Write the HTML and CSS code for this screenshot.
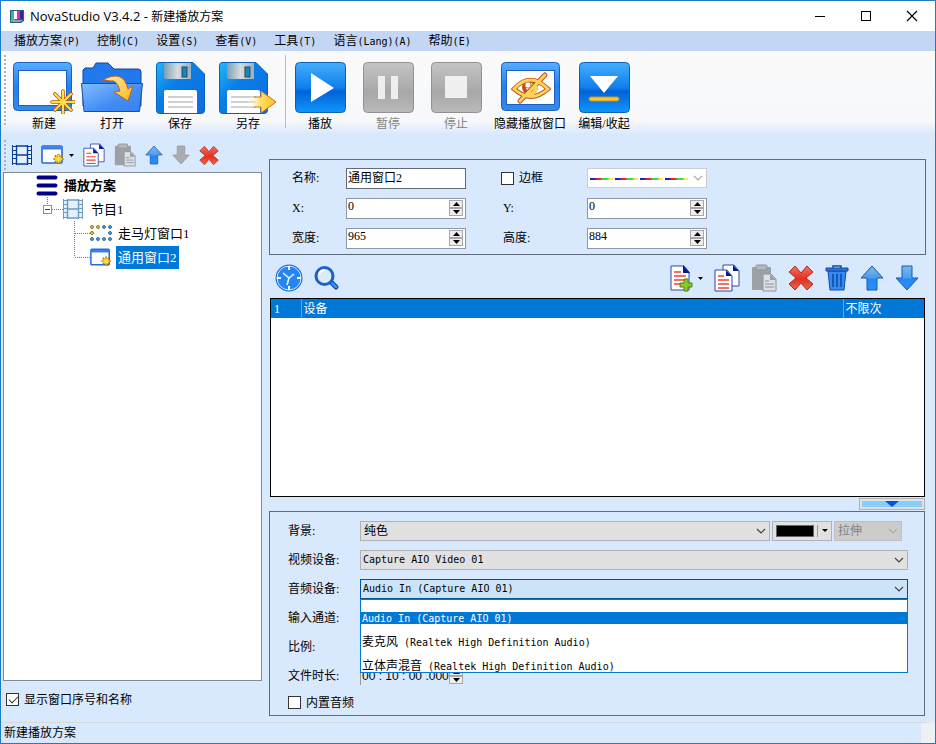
FILE: index.html
```html
<!DOCTYPE html>
<html lang="zh-CN">
<head>
<meta charset="utf-8">
<title>NovaStudio V3.4.2 - 新建播放方案</title>
<link rel="stylesheet" href="styles.css">
</head>
<body>
<svg class="defs" aria-hidden="true">
  <defs>
    <linearGradient id="blue" x1="0" y1="0" x2="0" y2="1"><stop offset="0" stop-color="#45adfc"/><stop offset=".5" stop-color="#0e80ea"/><stop offset=".58" stop-color="#0062d8"/><stop offset="1" stop-color="#1097fb"/></linearGradient>
    <linearGradient id="frame" x1="0" y1="0" x2="0" y2="1"><stop offset="0" stop-color="#58adff"/><stop offset=".5" stop-color="#2582ee"/><stop offset="1" stop-color="#3589ef"/></linearGradient>
    <linearGradient id="gray" x1="0" y1="0" x2="0" y2="1"><stop offset="0" stop-color="#c5c5c5"/><stop offset=".6" stop-color="#a7a7a7"/><stop offset="1" stop-color="#bababa"/></linearGradient>
    <linearGradient id="folder" x1="0" y1="0" x2="1" y2="1"><stop offset="0" stop-color="#83beff"/><stop offset=".6" stop-color="#418cf5"/><stop offset="1" stop-color="#3882ef"/></linearGradient>
    <linearGradient id="disk" x1="0" y1="0" x2="1" y2="1"><stop offset="0" stop-color="#24b7f7"/><stop offset=".4" stop-color="#087ee7"/><stop offset="1" stop-color="#116be1"/></linearGradient>
    <linearGradient id="gold" x1="0" y1="0" x2="1" y2="1"><stop offset="0" stop-color="#fff4a4"/><stop offset="1" stop-color="#ffb51c"/></linearGradient>
    <linearGradient id="goldh"><stop offset="0" stop-color="#fff" stop-opacity="0"/><stop offset=".5" stop-color="#ffdf62"/><stop offset="1" stop-color="#ffbd24"/></linearGradient>
    <linearGradient id="metal"><stop offset="0" stop-color="#7e9eb4"/><stop offset=".5" stop-color="#d6dce0"/><stop offset="1" stop-color="#9db0bd"/></linearGradient>
    <linearGradient id="arrow" x1="0" y1="0" x2="0" y2="1"><stop offset="0" stop-color="#7db9ef"/><stop offset=".5" stop-color="#4e9ce8"/><stop offset=".55" stop-color="#2186fb"/><stop offset="1" stop-color="#2d8efb"/></linearGradient>
    <linearGradient id="red" x1="0" y1="0" x2="0" y2="1"><stop offset="0" stop-color="#ef7268"/><stop offset=".55" stop-color="#e5301e"/><stop offset="1" stop-color="#e46d52"/></linearGradient>
  </defs>
  <symbol id="i-film" viewBox="0 0 20 20"><rect x="1" y="1" width="18" height="18" fill="#e4f0ff"/><path d="M.5 0v20M19.500 0v20" stroke="currentColor"/><path d="M4.500 0v20M15.500 0v20M5 1h10M5 10h10M5 19h10" stroke="currentColor" stroke-width="1.400"/><path d="M1 1.500h4M1 5.500h4M1 9.500h4M1 13.500h4M1 18.500h4M15 1.500h4M15 5.500h4M15 9.500h4M15 13.500h4M15 18.500h4" stroke="currentColor"/></symbol>
  <symbol id="i-window" viewBox="0 0 24 20"><rect x="1" y="1" width="20" height="17" rx="1" fill="#fff" stroke="#2468df" stroke-width="1.6"/><path d="M1 3h20" stroke="#3a7df0" stroke-width="3"/><path d="M17.500 9v10M12.500 14h10M14 10.500l7 7M21 10.500l-7 7" stroke="#b66a00" stroke-width="2"/><path d="M17.500 10v8M13.500 14h8M15 11.500l5 5M20 11.500l-5 5" stroke="#ffe43b" stroke-width="1.300"/></symbol>
  <symbol id="i-copy" viewBox="0 0 26 28"><path d="M9 1h11l5 6v15H9z" fill="#fff" stroke="#2b4aa5"/><path d="M19 1l6 6h-6z" fill="#001d97"/><path d="M1 6h12l5 6v15H1z" fill="#fff" stroke="#2b4aa5"/><path d="M12 6l6 6h-6z" fill="#001d97"/><path d="M4 12h6M4 16h11M4 20h11M4 24h11" stroke="#ef432f" stroke-width="1.300"/></symbol>
  <symbol id="i-paste" viewBox="0 0 26 28"><rect x="1" y="3" width="19" height="23" rx="1" fill="#9ca1a8"/><rect x="5" y="1" width="11" height="5" rx="1" fill="#b4b7bc" stroke="#8f9399"/><path d="M12 10h8l5 5v12H12z" fill="#dce0e5" stroke="#8d949d"/><path d="M19 10l6 6h-6z" fill="#989fa7"/><path d="M14 17h4M14 20h9M14 23h9" stroke="#8d949d"/></symbol>
  <symbol id="i-up" viewBox="0 0 24 26"><path d="M12 1L23 13h-6v12H7V13H1z" fill="url(#arrow)" stroke="#1559b5"/></symbol>
  <symbol id="i-down" viewBox="0 0 24 26"><path d="M7 1h10v12h6L12 25 1 13h6z" fill="url(#arrow)" stroke="#1559b5"/></symbol>
  <symbol id="i-downgray" viewBox="0 0 24 26"><path d="M7 1h10v12h6L12 25 1 13h6z" fill="#a9adb2" stroke="#8f959c"/></symbol>
  <symbol id="i-x" viewBox="0 0 26 26"><path d="M7 1l6 7 6-7 6 6-7 6 7 6-6 6-6-7-6 7-6-6 7-6-7-6z" fill="url(#red)" stroke="#b52a1c" stroke-linejoin="round"/></symbol>
  <symbol id="i-chev" viewBox="0 0 10 6"><path d="M1 1l4 4 4-4" fill="none" stroke="currentColor" stroke-width="1.200"/></symbol>
  <symbol id="i-floppy" viewBox="0 0 49 52"><path d="M3 .5h34L48.500 12v36q0 3.500-3 3.500H3.500q-3 0-3-3V4q0-3.500 2.500-3.500z" fill="url(#disk)" stroke="#0a62b8"/><path d="M8 1h27v16H10q-2 0-2-2z" fill="url(#metal)"/><rect x="26" y="5" width="5" height="10" fill="#1686bd" stroke="#234c62"/><path d="M10 28h29q2 0 2 2v21H8V30q0-2 2-2z" fill="#fff"/><path d="M12 35h25M12 40h25M12 45h25" stroke="#9ca1aa"/></symbol>
</svg>

<div class="window">
  <header class="titlebar">
    <svg class="app-icon" viewBox="0 0 14 13"><path d="M0 0h14v11l-3 2H0z" fill="#28607b"/><path d="M1 1h4v9H1z" fill="#2eb8b0"/><path d="M4 1h3v8H4z" fill="#fff"/><path d="M7 1h3v8H7z" fill="#e626a9"/><path d="M10 1h3v8h-3z" fill="#3521a3"/><path d="M1 10h12l-3 2H1z" fill="#88a6b2"/></svg>
    <h1><span class="product">NovaStudio V3.4.2 - </span>新建播放方案</h1>
    <button class="win-btn" aria-label="最小化"><svg width="12" height="12"><path d="M1 6.500h10" stroke="#000"/></svg></button>
    <button class="win-btn" aria-label="最大化"><svg width="12" height="12"><rect x="1.500" y="1.500" width="9" height="9" fill="none" stroke="#000"/></svg></button>
    <button class="win-btn" aria-label="关闭"><svg width="12" height="12"><path d="M1 1l10 10M11 1L1 11" stroke="#000" stroke-width="1.200"/></svg></button>
  </header>

  <nav class="menubar">
    <button>播放方案<span class="en">(P)</span></button>
    <button>控制<span class="en">(C)</span></button>
    <button>设置<span class="en">(S)</span></button>
    <button>查看<span class="en">(V)</span></button>
    <button>工具<span class="en">(T)</span></button>
    <button>语言<span class="en">(Lang)(A)</span></button>
    <button>帮助<span class="en">(E)</span></button>
  </nav>

  <div class="toolbar">
    <span class="grip"></span>
    <button class="tool"><svg width="62" height="52" viewBox="0 0 62 52"><rect x=".5" y=".5" width="58" height="48" rx="4" fill="url(#frame)" stroke="#1c62bd"/><rect x="5.500" y="8.500" width="48" height="35" fill="#fff" stroke="#1d5fc4"/><path d="M50 29v22M39 40h22M42 32l16 16M58 32L42 48" stroke="#b65b00" stroke-width="3.600" stroke-linecap="round"/><path d="M50 29v22M39 40h22M42 32l16 16M58 32L42 48" stroke="#ffdf4e" stroke-width="2" stroke-linecap="round"/></svg><span>新建</span></button>
    <button class="tool"><svg width="62" height="52" viewBox="0 0 62 52"><path d="M2 8l2-2h8l3-5h12l6 6h24q3 0 3 3v34H2z" fill="#2179ec" stroke="#14469b"/><path d="M.500 21.500h61l-3 28H3z" fill="url(#folder)" stroke="#1c4e9f"/><path d="M20 19q22-13 27 8l5-3-5 15-14-9 6-1q-3-12-10-10-5-2-9 0z" fill="url(#gold)" stroke="#bd5d26" stroke-linejoin="round"/></svg><span>打开</span></button>
    <button class="tool"><svg width="49" height="52"><use href="#i-floppy"/></svg><span>保存</span></button>
    <button class="tool"><svg width="58" height="52" viewBox="0 0 58 52"><svg width="49" height="52"><use href="#i-floppy"/></svg><path d="M27 35h15v-6l15 11-15 11v-6H27z" fill="url(#goldh)"/><path d="M35 35h7v-6l15 11-15 11v-6h-7" fill="none" stroke="#cf701c"/></svg><span>另存</span></button>
    <span class="divider"></span>
    <button class="tool"><svg width="51" height="52" viewBox="0 0 51 52"><rect x=".5" y=".5" width="50" height="50" rx="4" fill="url(#blue)" stroke="#0c60b4"/><path d="M16 11l23 15-23 14z" fill="#fff"/></svg><span>播放</span></button>
    <button class="tool" disabled><svg width="51" height="52" viewBox="0 0 51 52"><rect x=".5" y=".5" width="50" height="50" rx="4" fill="url(#gray)" stroke="#919191"/><path d="M15 14h7v23h-7zM28 14h7v23h-7z" fill="#eee"/></svg><span>暂停</span></button>
    <button class="tool" disabled><svg width="51" height="52" viewBox="0 0 51 52"><rect x=".5" y=".5" width="50" height="50" rx="4" fill="url(#gray)" stroke="#919191"/><path d="M14 14h22v22H14z" fill="#f0f0f0"/></svg><span>停止</span></button>
    <button class="tool tool-wide"><svg width="59" height="52" viewBox="0 0 59 52"><rect x=".5" y=".5" width="58" height="48" rx="4" fill="url(#frame)" stroke="#1c62bd"/><rect x="5.500" y="8.500" width="48" height="34" fill="#fff" stroke="#1d5fc4"/><g fill="none" stroke-linecap="round"><path d="M13 27q16-18 34 0-17 15-34 0z" stroke="#bd521b" stroke-width="4.600"/><circle cx="29" cy="25" r="6" stroke="#bd521b" stroke-width="4"/><path d="M19 39l25-26" stroke="#bd521b" stroke-width="5"/><path d="M13 27q16-18 34 0-17 15-34 0z" stroke="#ffd35a" stroke-width="2.800"/><path d="M35 25q-1 8-8 7" stroke="#ffd35a" stroke-width="4"/><path d="M19 39l25-26" stroke="#ffd35a" stroke-width="3"/><circle cx="27" cy="23" r="3" fill="#fff" stroke="#d88736"/></g></svg><span>隐藏播放窗口</span></button>
    <button class="tool"><svg width="51" height="52" viewBox="0 0 51 52"><rect x=".5" y=".5" width="50" height="50" rx="4" fill="url(#blue)" stroke="#0c60b4"/><path d="M11 14h28L25 31z" fill="#fff"/><rect x="10" y="35" width="30" height="4" rx="2" fill="#ffc52b" stroke="#bd9437"/></svg><span>编辑/收起</span></button>
  </div>

  <main class="content">
    <aside class="side">
      <div class="side-tools">
        <span class="grip"></span>
        <button aria-label="新建节目"><svg class="film" width="20" height="20"><use href="#i-film"/></svg></button>
        <button class="with-caret" aria-label="新建窗口"><svg width="24" height="20"><use href="#i-window"/></svg><svg width="5" height="3"><path d="M0 0h5L2.500 3z"/></svg></button>
        <button aria-label="复制"><svg width="22" height="24"><use href="#i-copy"/></svg></button>
        <button aria-label="粘贴" disabled><svg width="22" height="24"><use href="#i-paste"/></svg></button>
        <button aria-label="上移"><svg width="18" height="22" preserveAspectRatio="none"><use href="#i-up"/></svg></button>
        <button aria-label="下移" disabled><svg width="18" height="22"><use href="#i-downgray"/></svg></button>
        <button aria-label="删除"><svg width="20" height="21"><use href="#i-x"/></svg></button>
      </div>
      <ul class="tree">
        <li>
          <div class="node root"><svg width="22" height="24"><path d="M2.500 4.500h17M2.500 12.500h17M2.500 20.500h17" stroke="#00008a" stroke-width="4" stroke-linecap="round"/></svg><span class="name">播放方案</span></div>
          <ul>
            <li>
              <div class="node"><svg class="lines" width="27" height="24"><path d="M11.500 0v8M16 12.500h11" /><rect class="box" x="7.500" y="8.500" width="8" height="8"/><path class="minus" d="M9 12.500h5"/></svg><svg class="film-soft" width="20" height="20"><use href="#i-film"/></svg><span class="name">节目1</span></div>
              <ul>
                <li><div class="node"><svg class="lines" width="27" height="24"><path d="M11.500 0v24M12 12.500h15"/></svg><svg width="22" height="20"><g fill="#ffc94a" stroke="#8c7026"><circle cx="2" cy="4" r="1.500"/><circle cx="8" cy="4" r="1.500"/><circle cx="2" cy="10" r="1.500"/></g><g fill="#4d9ee8" stroke="#3b6c9a"><circle cx="14" cy="4" r="1.500"/><circle cx="20" cy="4" r="1.500"/><circle cx="20" cy="10" r="1.500"/><circle cx="2" cy="16" r="1.500"/><circle cx="8" cy="16" r="1.500"/><circle cx="14" cy="16" r="1.500"/><circle cx="20" cy="16" r="1.500"/></g></svg><span class="name">走马灯窗口1</span></div></li>
                <li><div class="node"><svg class="lines" width="27" height="24"><path d="M11.500 0v12M12 12.500h15"/></svg><svg width="22" height="19"><use href="#i-window"/></svg><span class="name selected">通用窗口2</span></div></li>
              </ul>
            </li>
          </ul>
        </li>
      </ul>
      <label class="check show-names"><input type="checkbox" checked>显示窗口序号和名称</label>
    </aside>

    <section class="editor">
      <div class="panel geometry">
        <label for="name">名称:</label>
        <div class="cell"><input id="name" class="field" type="text" value="通用窗口2"></div>
        <label class="check"><input type="checkbox">边框</label>
        <div class="combo line-combo"><select aria-label="边框样式" disabled><option></option></select><span class="dash-line"></span><svg class="chev" width="10" height="6"><use href="#i-chev"/></svg></div>
        <label for="x">X:</label>
        <div class="cell"><div class="spin"><input id="x" type="text" value="0"><span class="steps"><button aria-label="增加"><svg width="7" height="4"><path d="M0 4h7L3.500 0z"/></svg></button><button aria-label="减少"><svg width="7" height="4"><path d="M0 0h7L3.500 4z"/></svg></button></span></div></div>
        <label class="second" for="y">Y:</label>
        <div class="spin"><input id="y" type="text" value="0"><span class="steps"><button aria-label="增加"><svg width="7" height="4"><path d="M0 4h7L3.500 0z"/></svg></button><button aria-label="减少"><svg width="7" height="4"><path d="M0 0h7L3.500 4z"/></svg></button></span></div>
        <label for="w">宽度:</label>
        <div class="cell"><div class="spin"><input id="w" type="text" value="965"><span class="steps"><button aria-label="增加"><svg width="7" height="4"><path d="M0 4h7L3.500 0z"/></svg></button><button aria-label="减少"><svg width="7" height="4"><path d="M0 0h7L3.500 4z"/></svg></button></span></div></div>
        <label class="second" for="h">高度:</label>
        <div class="spin"><input id="h" type="text" value="884"><span class="steps"><button aria-label="增加"><svg width="7" height="4"><path d="M0 4h7L3.500 0z"/></svg></button><button aria-label="减少"><svg width="7" height="4"><path d="M0 0h7L3.500 4z"/></svg></button></span></div>
      </div>

      <div class="media-tools">
        <button aria-label="定时"><svg width="28" height="28" viewBox="0 0 28 28"><circle cx="14" cy="14" r="13.500" fill="#176edb"/><circle cx="14" cy="14" r="12" fill="#2684f7" stroke="#d6eaff"/><path d="M14 2v4M14 22v4M2 14h4M22 14h4" stroke="#fff" stroke-width="2"/><path d="M8 9l6 5 5-4M14 14l-2 7" fill="none" stroke="#e8f4ff" stroke-width="1.600"/></svg></button>
        <button aria-label="预览"><svg width="26" height="26" viewBox="0 0 26 26"><path d="M17 17l5 5" stroke="#1554b8" stroke-width="5" stroke-linecap="round"/><path d="M18 18l4 4" stroke="#4799f5" stroke-width="2" stroke-linecap="round"/><circle cx="10.500" cy="11" r="8.500" fill="#dcebf9" stroke="#1c61c8" stroke-width="3"/><path d="M5 10q1-5 6-5" fill="none" stroke="#fff" stroke-width="2"/></svg></button>
        <span class="spacer"></span>
        <button class="with-caret" aria-label="添加"><svg width="24" height="28" viewBox="0 0 24 28"><path d="M1 2h13l5 6v18H1z" fill="#fff" stroke="#2b4aa5"/><path d="M13 1l7 8h-7z" fill="#001d97"/><path d="M4 8h7M4 12h12M4 16h10M4 20h6" stroke="#ef432f" stroke-width="1.500"/><path d="M14 15h4v4h4v4h-4v4h-4v-4h-4v-4h4z" fill="#8bc829" stroke="#498514"/></svg><svg width="5" height="3"><path d="M0 0h5L2.500 3z"/></svg></button>
        <button aria-label="复制"><svg width="26" height="28"><use href="#i-copy"/></svg></button>
        <button aria-label="粘贴" disabled><svg width="26" height="28"><use href="#i-paste"/></svg></button>
        <button aria-label="删除"><svg width="26" height="26"><use href="#i-x"/></svg></button>
        <button aria-label="清空"><svg width="24" height="26" viewBox="0 0 24 26"><path d="M8 3V1h8v2" fill="none" stroke="#14489f" stroke-width="1.500"/><path d="M3 6h18l-2 19H5z" fill="#338cf6" stroke="#14489f"/><path d="M1 3h22v3H1z" fill="#2579e2" stroke="#14489f"/><path d="M8 9v13M12 9v13M16 9v13" stroke="#10479f" stroke-width="1.500"/></svg></button>
        <button aria-label="上移"><svg width="24" height="26"><use href="#i-up"/></svg></button>
        <button aria-label="下移"><svg width="24" height="26"><use href="#i-down"/></svg></button>
      </div>

      <div class="media-list">
        <table><tbody><tr><td class="num">1</td><td>设备</td><td class="times">不限次</td></tr></tbody></table>
      </div>

      <div class="collapse-row"><button class="collapse" aria-label="收起"><svg width="14" height="6"><path d="M0 0h14L7 6z" fill="#0055dd"/></svg></button></div>

      <div class="panel props">
        <label for="bg">背景:</label>
        <div class="bg-row">
          <div class="combo grow"><select id="bg"><option>纯色</option></select><svg class="chev" width="10" height="6"><use href="#i-chev"/></svg></div>
          <button class="swatch" aria-label="颜色"><span class="chip"></span><span class="bar"></span><svg width="6" height="3"><path d="M0 0h6L3 3z"/></svg></button>
          <div class="combo stretch"><select aria-label="填充方式" disabled><option>拉伸</option></select><svg class="chev" width="10" height="6"><use href="#i-chev"/></svg></div>
        </div>
        <label for="video">视频设备:</label>
        <div class="combo"><select id="video" class="en"><option>Capture AIO Video 01</option></select><svg class="chev" width="10" height="6"><use href="#i-chev"/></svg></div>
        <label for="audio">音频设备:</label>
        <div class="combo open">
          <select id="audio" class="en"><option>Audio In (Capture AIO 01)</option></select><svg class="chev" width="10" height="6"><use href="#i-chev"/></svg>
          <ul class="options" role="listbox">
            <li role="option" class="current"><span class="en">Audio In (Capture AIO 01)</span></li>
            <li role="option">麦克风<span class="en"> (Realtek High Definition Audio)</span></li>
            <li role="option">立体声混音<span class="en"> (Realtek High Definition Audio)</span></li>
          </ul>
        </div>
        <span class="row-label">输入通道:</span><span></span>
        <span class="row-label">比例:</span><span></span>
        <label for="time">文件时长:</label>
        <div class="spin time"><input id="time" type="text" value="00 : 10 : 00 .000"><span class="steps"><button aria-label="增加"><svg width="7" height="4"><path d="M0 4h7L3.500 0z"/></svg></button><button aria-label="减少"><svg width="7" height="4"><path d="M0 0h7L3.500 4z"/></svg></button></span></div>
        <label class="check builtin"><input type="checkbox">内置音频</label>
      </div>
    </section>
  </main>

  <footer class="status">新建播放方案</footer>
</div>
</body>
</html>
```
FILE: styles.css
```css
* { box-sizing: border-box; }
body { margin: 0; font: 12px/16px "Liberation Serif", "Noto Sans CJK SC", serif; color: #000; }
button, input, select { font: inherit; color: inherit; margin: 0; }
button { padding: 0; border: 0; background: none; }
svg { display: block; flex: none; }
ul { list-style: none; margin: 0; padding: 0; }
.defs { position: absolute; width: 0; height: 0; }
.en, .combo select.en { font-family: "DejaVu Sans Mono", "Liberation Mono", monospace; font-size: 10px; }

.window { display: flex; flex-direction: column; min-height: 100vh; border: 1px solid #1c7cc8; background: #d9e9fd; }

.titlebar { display: flex; align-items: center; height: 30px; padding-left: 9px; background: #fff; }
.app-icon { width: 14px; height: 13px; }
.titlebar h1 { flex: 1; margin: 0 0 0 6px; font: 12px/16px "Open Sans", "Noto Sans CJK SC", sans-serif; }
.product { font-size: 13px; }
.win-btn { display: flex; align-items: center; justify-content: center; width: 46px; height: 30px; }

.menubar { display: flex; gap: 17px; height: 20px; padding-left: 13px; background: #c3d7f5; }
.menubar button { line-height: 20px; white-space: nowrap; }

.grip { flex: none; width: 2px; background: repeating-linear-gradient(#aab3c0 0 2px, transparent 2px 4px); }
.toolbar { display: flex; height: 85px; padding: 4px 0 0 3px; background: linear-gradient(#fafafa, #f7f8fa 70px, #d9e9fd 83px); }
.toolbar .grip { height: 72px; margin-right: 4px; }
.tool { display: flex; flex-direction: column; align-items: center; width: 68px; padding-top: 7px; white-space: nowrap; }
.tool svg { margin-bottom: 2px; }
.tool:disabled { color: #838383; }
.tool-wide { width: 80px; }
.divider { width: 1px; height: 73px; margin: 0 0 0 3px; background: #b9bcc1; }

.content { flex: 1; display: flex; padding-right: 9px; }
.side { display: flex; flex-direction: column; flex: none; width: 261px; padding-left: 2px; }
.side-tools { display: flex; align-items: center; gap: 9px; height: 36px; padding: 2px 0 0 1px; }
.side-tools .grip { height: 30px; margin-right: -3px; }
.with-caret { display: flex; align-items: center; gap: 4px; }
.film { color: #063f9d; }
.film-soft { color: #6e9db8; }
.tree { flex: 1; border: 1px solid #828a96; background: #fff; font-size: 13px; }
.tree > li { padding-left: 32px; }
.tree ul ul { padding-left: 27px; }
.node { display: flex; align-items: center; height: 24px; }
.name { padding: 0 2px; margin-left: 4px; line-height: 23px; white-space: nowrap; }
.film-soft + .name { margin-left: 6px; }
.root .name { font-weight: bold; }
.selected { background: #0078d7; color: #fff; }
.lines path { stroke: #777; stroke-dasharray: 1 1; }
.lines .box { fill: #fff; stroke: #919191; }
.lines .minus { stroke: #345; stroke-dasharray: none; }
.check { display: flex; align-items: center; gap: 5px; white-space: nowrap; }
.check input { appearance: none; width: 13px; height: 13px; border: 1px solid #333; background: #fff; }
.check input:checked::after { content: ""; display: block; width: 4px; height: 8px; margin-left: 4px; border: solid #333; border-width: 0 1px 1px 0; transform: rotate(45deg); }
.show-names { height: 41px; padding: 0 0 4px 3px; }

.editor { flex: 1; display: flex; flex-direction: column; min-width: 0; padding: 23px 0 6px 7px; }
.panel { border: 1px solid #5f6b7d; }
.geometry { display: grid; grid-template-columns: 54px 155px 86px 120px; grid-auto-rows: 30px; align-items: center; padding: 3px 0 1px 22px; }
.cell { width: 120px; }
.second { padding-left: 2px; }
.field, .spin { display: flex; width: 100%; height: 21px; border: 1px solid #8d97a5; background: #fff; }
.field { padding: 0 1px 2px; border-color: #616a75; }
.spin { padding-right: 2px; }
.spin input { flex: 1; min-width: 0; padding: 0 0 4px 1px; border: 0; outline: 0; background: none; }
.steps { display: flex; flex-direction: column; width: 14px; padding-top: 1px; }
.steps button { display: flex; align-items: center; justify-content: center; height: 8px; border: 1px solid #a7a7a7; background: #eee; }

.combo { position: relative; display: flex; height: 20px; }
.combo select { appearance: none; width: 100%; height: 100%; padding: 0 20px 0 2px; border: 1px solid #adb2b8; border-radius: 0; background: #e1e1e1; opacity: 1; outline: 0; }
.combo .chev { position: absolute; right: 4px; top: 7px; color: #444; pointer-events: none; }
.combo.line-combo select { border-color: #ccc; background: #fff; }
.combo.line-combo .chev { color: #aaa; }
.dash-line { position: absolute; left: 3px; right: 19px; top: 10px; height: 2px; background: repeating-linear-gradient(90deg, #22b 0 4px, #e22 7px 10px, #3d5 13px 17px, #fe3 20px 23px, #fff 23px 25px); }

.media-tools { display: flex; align-items: center; gap: 11px; height: 43px; padding: 3px 7px 0 6px; }
.spacer { flex: 1; }

.media-list { flex: 1; min-height: 198px; margin: 0 1px; border: 1px solid #000; background: #fff; }
.media-list table { width: 100%; border-collapse: collapse; background: #0078d7; color: #fff; }
.media-list td { height: 19px; padding: 0 2px; border-right: 1px solid #60a5e0; line-height: 18px; }
.media-list td:last-child { border-right: 0; }
.media-list .num { width: 30px; padding-left: 3px; }
.times { width: 81px; }
.collapse-row { display: flex; justify-content: flex-end; height: 14px; padding: 1px 1px 1px 0; }
.collapse { display: flex; justify-content: center; width: 66px; padding: 2px; border: 1px solid #adb2b8; background: #87cefa; box-shadow: inset 0 0 0 2px #e1e1e1; }

.props { display: grid; grid-template-columns: 72px 1fr; grid-template-rows: repeat(6, 29px) 25px; align-items: center; margin-right: 1px; padding: 4px 16px 0 18px; }
.bg-row { display: flex; gap: 2px; margin-right: 6px; }
.grow { flex: 1; }
.bg-row .combo select { padding-left: 3px; }
.swatch { display: flex; align-items: center; width: 60px; height: 20px; padding: 0 3px; border: 1px solid #adb2b8; background: #e1e1e1; }
.chip { width: 40px; height: 12px; background: #000; border: 1px solid #666; }
.bar { width: 1px; height: 12px; margin: 0 4px 0 3px; background: #999; }
.stretch { width: 68px; }
.combo.stretch select { background: #ccc; border-color: #bfbfbf; color: #838383; }
.combo.stretch .chev { color: #aaa; }
.combo.open select { border-color: #005499; background: #cce4f7; }
.options { position: absolute; z-index: 1; top: 20px; left: 0; right: 0; display: flex; flex-direction: column; gap: 12px; height: 74px; padding-top: 12px; overflow: hidden; border: 1px solid #0078d7; background: #fff; }
.options li { flex: none; height: 12px; padding-left: 1px; line-height: 12px; white-space: nowrap; }
.options .current { background: #0078d7; color: #fff; }
.spin.time { width: 105px; height: 18px; border-width: 0 0 0 1px; background: none; font-family: "Liberation Sans", sans-serif; }
.spin.time input { padding-bottom: 0; }
.builtin { grid-column: 1 / -1; }

.status { height: 21px; padding: 0 3px; border-top: 1px solid #d5d8dc; border-right: 14px solid #edf0f4; line-height: 20px; }
```
